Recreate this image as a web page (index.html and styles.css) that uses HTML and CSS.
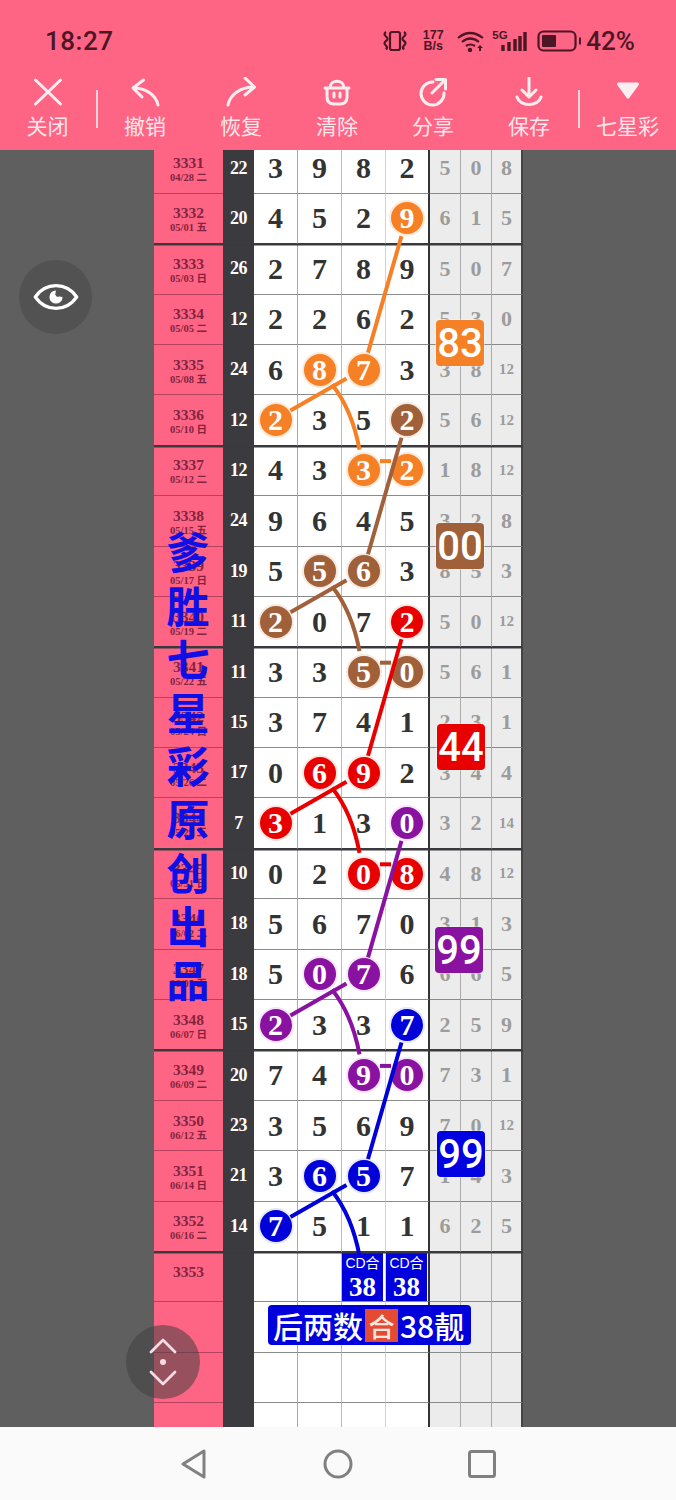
FILE: index.html
```html
<!DOCTYPE html>
<html>
  <head>
    <meta charset="utf-8">
    <title>七星彩</title>
    <link rel="stylesheet" href="styles.css">
  </head>
  <body>
    <div class="top">
      <div class="status">
        <span class="time">18:27</span>
        <div class="sys">
          <svg class="i-vib" width="26" height="22" viewBox="0 0 26 22"><rect x="8" y="2" width="10" height="18" rx="2"/><path d="M4 2q-3 2 0 4.500q3 2.500 0 4.500q-3 2 0 4.500q2 2 0 4M22 2q3 2 0 4.500q-3 2.500 0 4.500q3 2 0 4.500q-2 2 0 4"/></svg>
          <div class="speed"><span>177</span><span>B/s</span></div>
          <svg class="i-wifi" width="30" height="22" viewBox="0 0 30 22"><path d="M2 8q12-10 25 0M6 12q8-7 17 0M10 16q4-3 9 0"/><circle class="fill" cx="14" cy="20" r="2.200"/><path class="fill" d="M23 21v-5h2v5zM21 18l3-3 3 3z"/></svg>
          <div class="sig">
            <span class="g5">5G</span>
            <svg width="26" height="20" viewBox="0 0 26 20"><path class="bars" d="M2 13v6M8 10v9M14 7v12M19 4v15M24 0v19"/></svg>
          </div>
          <svg class="i-bat" width="44" height="22" viewBox="0 0 44 22"><rect x="1.500" y="1.500" width="37" height="19" rx="5"/><rect class="fill" x="5" y="5" width="14" height="12" rx="1"/><rect class="fill" x="42" y="7.500" width="2" height="7"/></svg>
          <span class="pct">42%</span>
        </div>
      </div>
      <div class="tools">
        <div class="tool first">
          <svg width="30" height="30" viewBox="0 0 30 30"><path d="M2.500 3L27.500 27M27.500 3L2.500 27"/></svg>
          <span>关闭</span>
        </div>
        <div class="sep"></div>
        <div class="tool">
          <svg width="30" height="30" viewBox="0 0 30 30"><path d="M28 28C26 18 16 11 3 11M13.500 3L3 11L12 20"/></svg>
          <span>撤销</span>
        </div>
        <div class="tool">
          <svg width="30" height="30" viewBox="0 0 30 30"><path d="M2 28C4 18 14 10 28 10M19 1L28.500 10L19 18"/></svg>
          <span>恢复</span>
        </div>
        <div class="tool">
          <svg width="30" height="30" viewBox="0 0 30 30"><path d="M3 11H27M5 11V20Q5 27 12 27H18Q25 27 25 20V11M8 11C8 2 22 2 22 11M12 16V20M18 16V20"/></svg>
          <span>清除</span>
        </div>
        <div class="tool">
          <svg width="30" height="30" viewBox="0 0 30 30"><path d="M15 5A11.500 11.500 0 1 0 26 16M14 16L27 3M18 2.500H27.500V12"/></svg>
          <span>分享</span>
        </div>
        <div class="tool">
          <svg width="30" height="30" viewBox="0 0 30 30"><path d="M15 1V20M8 13L15 20L22 13M3 20C6 30 24 30 27 20"/></svg>
          <span>保存</span>
        </div>
        <div class="sep"></div>
        <div class="tool last">
          <svg width="30" height="30" viewBox="0 0 30 30"><path class="tri" d="M5.500 7H24.500L15 20Z"/></svg>
          <span>七星彩</span>
        </div>
      </div>
    </div>

    <div class="view">
      <div class="chart">
        <div class="row"><div class="qi"><b>3331</b><small>04/28 二</small></div><div class="sum">22</div><div class="n">3</div><div class="n">9</div><div class="n">8</div><div class="n end">2</div><div class="g">5</div><div class="g">0</div><div class="g">8</div></div>
        <div class="row sec"><div class="qi"><b>3332</b><small>05/01 五</small></div><div class="sum">20</div><div class="n">4</div><div class="n">5</div><div class="n">2</div><div class="n end"><span class="ball or">9</span></div><div class="g">6</div><div class="g">1</div><div class="g">5</div></div>
        <div class="row"><div class="qi"><b>3333</b><small>05/03 日</small></div><div class="sum">26</div><div class="n">2</div><div class="n">7</div><div class="n">8</div><div class="n end">9</div><div class="g">5</div><div class="g">0</div><div class="g">7</div></div>
        <div class="row"><div class="qi"><b>3334</b><small>05/05 二</small></div><div class="sum">12</div><div class="n">2</div><div class="n">2</div><div class="n">6</div><div class="n end">2</div><div class="g">5</div><div class="g">3</div><div class="g">0</div></div>
        <div class="row"><div class="qi"><b>3335</b><small>05/08 五</small></div><div class="sum">24</div><div class="n">6</div><div class="n"><span class="ball or">8</span></div><div class="n"><span class="ball or">7</span></div><div class="n end">3</div><div class="g">3</div><div class="g">8</div><div class="g s">12</div></div>
        <div class="row sec"><div class="qi"><b>3336</b><small>05/10 日</small></div><div class="sum">12</div><div class="n"><span class="ball or">2</span></div><div class="n">3</div><div class="n">5</div><div class="n end"><span class="ball br">2</span></div><div class="g">5</div><div class="g">6</div><div class="g s">12</div></div>
        <div class="row"><div class="qi"><b>3337</b><small>05/12 二</small></div><div class="sum">12</div><div class="n">4</div><div class="n">3</div><div class="n"><span class="ball or">3</span></div><div class="n end"><span class="ball or">2</span></div><div class="g">1</div><div class="g">8</div><div class="g s">12</div></div>
        <div class="row"><div class="qi"><b>3338</b><small>05/15 五</small></div><div class="sum">24</div><div class="n">9</div><div class="n">6</div><div class="n">4</div><div class="n end">5</div><div class="g">3</div><div class="g">2</div><div class="g">8</div></div>
        <div class="row"><div class="qi"><b>3339</b><small>05/17 日</small></div><div class="sum">19</div><div class="n">5</div><div class="n"><span class="ball br">5</span></div><div class="n"><span class="ball br">6</span></div><div class="n end">3</div><div class="g">8</div><div class="g">5</div><div class="g">3</div></div>
        <div class="row sec"><div class="qi"><b>3340</b><small>05/19 二</small></div><div class="sum">11</div><div class="n"><span class="ball br">2</span></div><div class="n">0</div><div class="n">7</div><div class="n end"><span class="ball re">2</span></div><div class="g">5</div><div class="g">0</div><div class="g s">12</div></div>
        <div class="row"><div class="qi"><b>3341</b><small>05/22 五</small></div><div class="sum">11</div><div class="n">3</div><div class="n">3</div><div class="n"><span class="ball br">5</span></div><div class="n end"><span class="ball br">0</span></div><div class="g">5</div><div class="g">6</div><div class="g">1</div></div>
        <div class="row"><div class="qi"><b>3342</b><small>05/24 日</small></div><div class="sum">15</div><div class="n">3</div><div class="n">7</div><div class="n">4</div><div class="n end">1</div><div class="g">2</div><div class="g">3</div><div class="g">1</div></div>
        <div class="row"><div class="qi"><b>3343</b><small>05/26 二</small></div><div class="sum">17</div><div class="n">0</div><div class="n"><span class="ball re">6</span></div><div class="n"><span class="ball re">9</span></div><div class="n end">2</div><div class="g">3</div><div class="g">4</div><div class="g">4</div></div>
        <div class="row sec"><div class="qi"><b>3344</b><small>05/29 五</small></div><div class="sum">7</div><div class="n"><span class="ball re">3</span></div><div class="n">1</div><div class="n">3</div><div class="n end"><span class="ball pu">0</span></div><div class="g">3</div><div class="g">2</div><div class="g s">14</div></div>
        <div class="row"><div class="qi"><b>3345</b><small>05/31 日</small></div><div class="sum">10</div><div class="n">0</div><div class="n">2</div><div class="n"><span class="ball re">0</span></div><div class="n end"><span class="ball re">8</span></div><div class="g">4</div><div class="g">8</div><div class="g s">12</div></div>
        <div class="row"><div class="qi"><b>3346</b><small>06/02 二</small></div><div class="sum">18</div><div class="n">5</div><div class="n">6</div><div class="n">7</div><div class="n end">0</div><div class="g">3</div><div class="g">1</div><div class="g">3</div></div>
        <div class="row"><div class="qi"><b>3347</b><small>06/05 五</small></div><div class="sum">18</div><div class="n">5</div><div class="n"><span class="ball pu">0</span></div><div class="n"><span class="ball pu">7</span></div><div class="n end">6</div><div class="g">6</div><div class="g">6</div><div class="g">5</div></div>
        <div class="row sec"><div class="qi"><b>3348</b><small>06/07 日</small></div><div class="sum">15</div><div class="n"><span class="ball pu">2</span></div><div class="n">3</div><div class="n">3</div><div class="n end"><span class="ball bl">7</span></div><div class="g">2</div><div class="g">5</div><div class="g">9</div></div>
        <div class="row"><div class="qi"><b>3349</b><small>06/09 二</small></div><div class="sum">20</div><div class="n">7</div><div class="n">4</div><div class="n"><span class="ball pu">9</span></div><div class="n end"><span class="ball pu">0</span></div><div class="g">7</div><div class="g">3</div><div class="g">1</div></div>
        <div class="row"><div class="qi"><b>3350</b><small>06/12 五</small></div><div class="sum">23</div><div class="n">3</div><div class="n">5</div><div class="n">6</div><div class="n end">9</div><div class="g">7</div><div class="g">0</div><div class="g s">12</div></div>
        <div class="row"><div class="qi"><b>3351</b><small>06/14 日</small></div><div class="sum">21</div><div class="n">3</div><div class="n"><span class="ball bl">6</span></div><div class="n"><span class="ball bl">5</span></div><div class="n end">7</div><div class="g">1</div><div class="g">4</div><div class="g">3</div></div>
        <div class="row sec"><div class="qi"><b>3352</b><small>06/16 二</small></div><div class="sum">14</div><div class="n"><span class="ball bl">7</span></div><div class="n">5</div><div class="n">1</div><div class="n end">1</div><div class="g">6</div><div class="g">2</div><div class="g">5</div></div>
        <div class="row"><div class="qi"><b>3353</b><small>&nbsp;</small></div><div class="sum"></div><div class="n"></div><div class="n"></div><div class="n"><div class="cd"><span>CD合</span><b>38</b></div></div><div class="n end"><div class="cd"><span>CD合</span><b>38</b></div></div><div class="g"></div><div class="g"></div><div class="g"></div></div>
        <div class="row"><div class="qi"></div><div class="sum"></div><div class="n"></div><div class="n"></div><div class="n"></div><div class="n end"></div><div class="g"></div><div class="g"></div><div class="g"></div></div>
        <div class="row"><div class="qi"></div><div class="sum"></div><div class="n"></div><div class="n"></div><div class="n"></div><div class="n end"></div><div class="g"></div><div class="g"></div><div class="g"></div></div>
        <div class="row"><div class="qi"></div><div class="sum"></div><div class="n"></div><div class="n"></div><div class="n"></div><div class="n end"></div><div class="g"></div><div class="g"></div><div class="g"></div></div>
        <div class="row"><div class="qi"></div><div class="sum"></div><div class="n"></div><div class="n"></div><div class="n"></div><div class="n end"></div><div class="g"></div><div class="g"></div><div class="g"></div></div>

        <!-- trend lines, same shape every four rows -->
        <svg class="lines" width="369" height="1284" viewBox="154 143.400 369 1284">
          <defs>
            <g id="fig">
              <path d="M401.500 236.500L368 353"/>
              <path d="M346.500 379L290.500 411"/>
              <path d="M332 385Q352 410 359.500 450"/>
            </g>
            <path id="link" d="M380 461.500H391"/>
          </defs>
          <g stroke="#f58025"><use href="#fig"/><use href="#link"/></g>
          <g stroke="#a0603a" transform="translate(0 201.600)"><use href="#fig"/><use href="#link"/></g>
          <g stroke="#e80000" transform="translate(0 403.200)"><use href="#fig"/><use href="#link"/></g>
          <g stroke="#8a12a0" transform="translate(0 604.800)"><use href="#fig"/><use href="#link"/></g>
          <g stroke="#0000d8" transform="translate(0 806.400)"><use href="#fig"/></g>
        </svg>

        <div class="tag or box1">83</div>
        <div class="tag br box2">00</div>
        <div class="tag re box3">44</div>
        <div class="tag pu box4">99</div>
        <div class="tag bl box5">99</div>

        <div class="banner">爹<br>胜<br>七<br>星<br>彩<br>原<br>创<br>出<br>品</div>

        <div class="note">后两数<em>合</em>38靓</div>
      </div>
    </div>

    <div class="nav">
      <div class="nav-item"><svg width="30" height="32" viewBox="0 0 30 32"><path d="M4 16L25 3V29Z"/></svg></div>
      <div class="nav-item"><svg width="30" height="30" viewBox="0 0 30 30"><circle cx="15" cy="15" r="13"/></svg></div>
      <div class="nav-item"><svg width="30" height="30" viewBox="0 0 30 30"><rect x="2.500" y="2.500" width="25" height="25" rx="2"/></svg></div>
    </div>

    <div class="float eye">
      <svg width="46" height="32" viewBox="0 0 48 34"><path d="M2 17C13 1 35 1 46 17C35 33 13 33 2 17Z"/><path class="pupil" d="M24 10a7 7 0 1 0 7 7l-3.500-.5a3 3 0 0 1-4-4z"/></svg>
    </div>
    <div class="float updown">
      <svg width="30" height="50" viewBox="0 0 30 50"><path d="M3 15L15 3L27 15M3 35L15 47L27 35"/><circle cx="15" cy="25" r="3"/></svg>
    </div>
  </body>
</html>
```

FILE: styles.css
```css
body {margin:0; width:676px; height:1500px; position:relative; overflow:hidden; background-color:#5f5f5f; font-family:"Liberation Serif","Noto Sans CJK SC",serif;}

/* top bar */
.top {height:150px; background-color:#fe6584; font-family:"Noto Sans CJK SC",sans-serif; position:relative; z-index:3;}
.status {height:70px; padding:6px 41px 0 45px; display:flex; align-items:center; justify-content:space-between; color:#4c1624;}
.time {font-family:Roboto,sans-serif; font-size:26px; font-weight:500; letter-spacing:0.5px;}
.sys {display:flex; align-items:center;}
.sys svg {fill:none; stroke:#4c1624; stroke-width:2.200; display:block;}
.sys svg .fill {fill:#4c1624; stroke:none;}
.speed {display:flex; flex-direction:column; margin-left:13px; font-family:"Liberation Sans",sans-serif; font-size:12.500px; font-weight:bold; line-height:11.500px; text-align:center; width:24px;}
.i-wifi {margin-left:11px;}
.sig {position:relative; margin-left:6px; width:35px; height:22px; display:flex; justify-content:flex-end; align-items:flex-end;}
.g5 {position:absolute; left:0; top:-1px; font-family:"Liberation Sans",sans-serif; font-size:11.500px; font-weight:bold;}
.sys svg .bars {stroke-width:3.400;}
.i-bat {margin-left:10px;}
.pct {font-family:Roboto,sans-serif; font-size:26px; font-weight:500; margin-left:5px;}

.tools {display:flex; height:74px; color:#fde6eb;}
.tool {width:96px; display:flex; flex-direction:column; align-items:center; font-size:21px; line-height:30px;}
.tool.first {width:95px;}
.tool.last {flex:1;}
.tool svg {margin-top:1px; margin-bottom:3px; fill:none; stroke:#fdeef1; stroke-width:3; stroke-linecap:round; stroke-linejoin:round;}
.tool svg .tri {fill:#fdeef1;}
.sep {width:2px; height:38px; margin:14px -1px 0 1px; background-color:#fbd3dc;}

/* chart */
.view {height:1277px; overflow:hidden;}
.chart {width:369px; margin:-6.600px 0 0 154px; position:relative;}
.row {display:grid; grid-template-columns:69px 31px repeat(4,44px) 31px 31px 31px; height:50.400px;}
.row > div {box-sizing:border-box; display:flex; align-items:center; justify-content:center; border-bottom:1px solid #8a8a8a;}
.row.sec {position:relative; z-index:1; box-shadow:0 1.500px 0 #3a3a3e;}
.row.sec > div {border-bottom-color:#3a3a3e;}

.qi {flex-direction:column; padding-top:3px; background-color:#fe6584; color:#84233f; border-bottom-color:#b9405f !important; line-height:13px;}
.row.sec .qi {border-bottom-color:#3a3a3e !important;}
.qi b {font-size:15.500px; line-height:16px;}
.qi small {font-size:10.500px; font-weight:bold; line-height:13px;}
.sum {background-color:#3b3b3f; color:white; font-size:18px; font-weight:bold; letter-spacing:-0.500px; border-bottom-color:#3b3b3f !important;}
.n {background-color:white; color:#333; font-size:30px; font-weight:bold; border-right:1px solid #aaa;}
.n:nth-child(4) {border-right-color:#bbb;}
.n:nth-child(5) {border-right-color:#cfd2d6;}
.n.end {border-right:2px solid #333;}
.g {background-color:#ececec; color:#9c9c9c; font-size:22px; font-weight:bold; border-right:1.500px solid #aaa;}
.g.s {font-size:15px;}
.row > .g:last-child {border-right:2px solid #444;}

.ball {width:32px; height:32px; border-radius:50%; color:white; display:flex; align-items:center; justify-content:center;}
.ball.or {background-color:#f58025; box-shadow:0 0 0 2px #fdeadb;}
.ball.br {background-color:#a0603a; box-shadow:0 0 0 2px #f6eadf;}
.ball.re {background-color:#e80000; box-shadow:0 0 0 2px #fde6e2;}
.ball.pu {background-color:#8a12a0; box-shadow:0 0 0 2px #f6e6f9;}
.ball.bl {background-color:#0000d8; box-shadow:0 0 0 2px #e8e8fc;}

.cd {box-sizing:border-box; width:41px; height:48px; margin-right:auto; background-color:#0000dc; color:white; display:flex; flex-direction:column; align-items:center; align-self:flex-start; margin-top:1px;}
.cd span {font-family:"Liberation Sans","Noto Sans CJK SC",sans-serif; font-size:14px; font-weight:normal; line-height:21px;}
.cd b {font-size:27px; line-height:27px;}

.lines {position:absolute; left:0; top:0; z-index:2; fill:none; stroke-width:4; pointer-events:none;}

.tag {position:absolute; z-index:2; left:283px; width:48px; height:46px; border-radius:4px; color:white; display:flex; align-items:center; justify-content:center; font-family:Roboto,sans-serif; font-size:40px; font-weight:500; box-shadow:0 0 0 1px rgba(255,255,255,0.35);}
.tag.or {background-color:#f58025;}
.tag.br {background-color:#a0603a;}
.tag.re {background-color:#e80000;}
.tag.pu {background-color:#8a12a0;}
.tag.bl {background-color:#0000e0;}
.box1 {top:177px; left:282px;}
.box2 {top:380px; left:282px;}
.box3 {top:581px;}
.box4 {top:784px; left:281px;}
.box5 {top:988px;}

.banner {position:absolute; z-index:2; left:12px; top:381px; width:44px; color:#0f0fe6; font-family:"Noto Sans CJK SC",sans-serif; font-size:43px; font-weight:bold; line-height:53.400px; text-align:center;}

.note {position:absolute; z-index:2; left:114px; top:1162px; width:203px; height:40px; box-sizing:border-box; padding-left:5px; border-radius:4px; background-color:#0000dc; color:white; display:flex; align-items:center; font-family:"Noto Sans CJK SC",sans-serif; font-size:30px; font-weight:500; white-space:nowrap;}
.note em {font-style:normal; width:33px; height:33px; margin:0 2px 0 2px; background-color:#e34b33; color:#fde6e0; font-size:26px; line-height:33px; text-align:center;}

/* floating buttons */
.float {position:absolute; border-radius:50%; display:flex; align-items:center; justify-content:center; z-index:4;}
.eye {left:19px; top:260px; width:73px; height:74px; background-color:#525252;}
.eye svg {fill:none; stroke:white; stroke-width:3.500; stroke-linejoin:round;}
.eye svg .pupil {fill:white; stroke:none;}
.updown {left:126px; top:1325px; width:74px; height:74px; background-color:rgba(64,64,64,0.55);}
.updown svg {fill:none; stroke:#f6dde3; stroke-width:2.800; stroke-linecap:round; stroke-linejoin:round;}
.updown svg circle {fill:#f6dde3; stroke:none;}

/* phone nav */
.nav {height:73px; background-color:#fafafa; box-sizing:border-box; padding-left:122px; display:flex; position:relative; z-index:3;}
.nav-item {width:144px; display:flex; align-items:center; justify-content:center;}
.nav-item svg {fill:none; stroke:#808080; stroke-width:3; stroke-linejoin:round;}
```
